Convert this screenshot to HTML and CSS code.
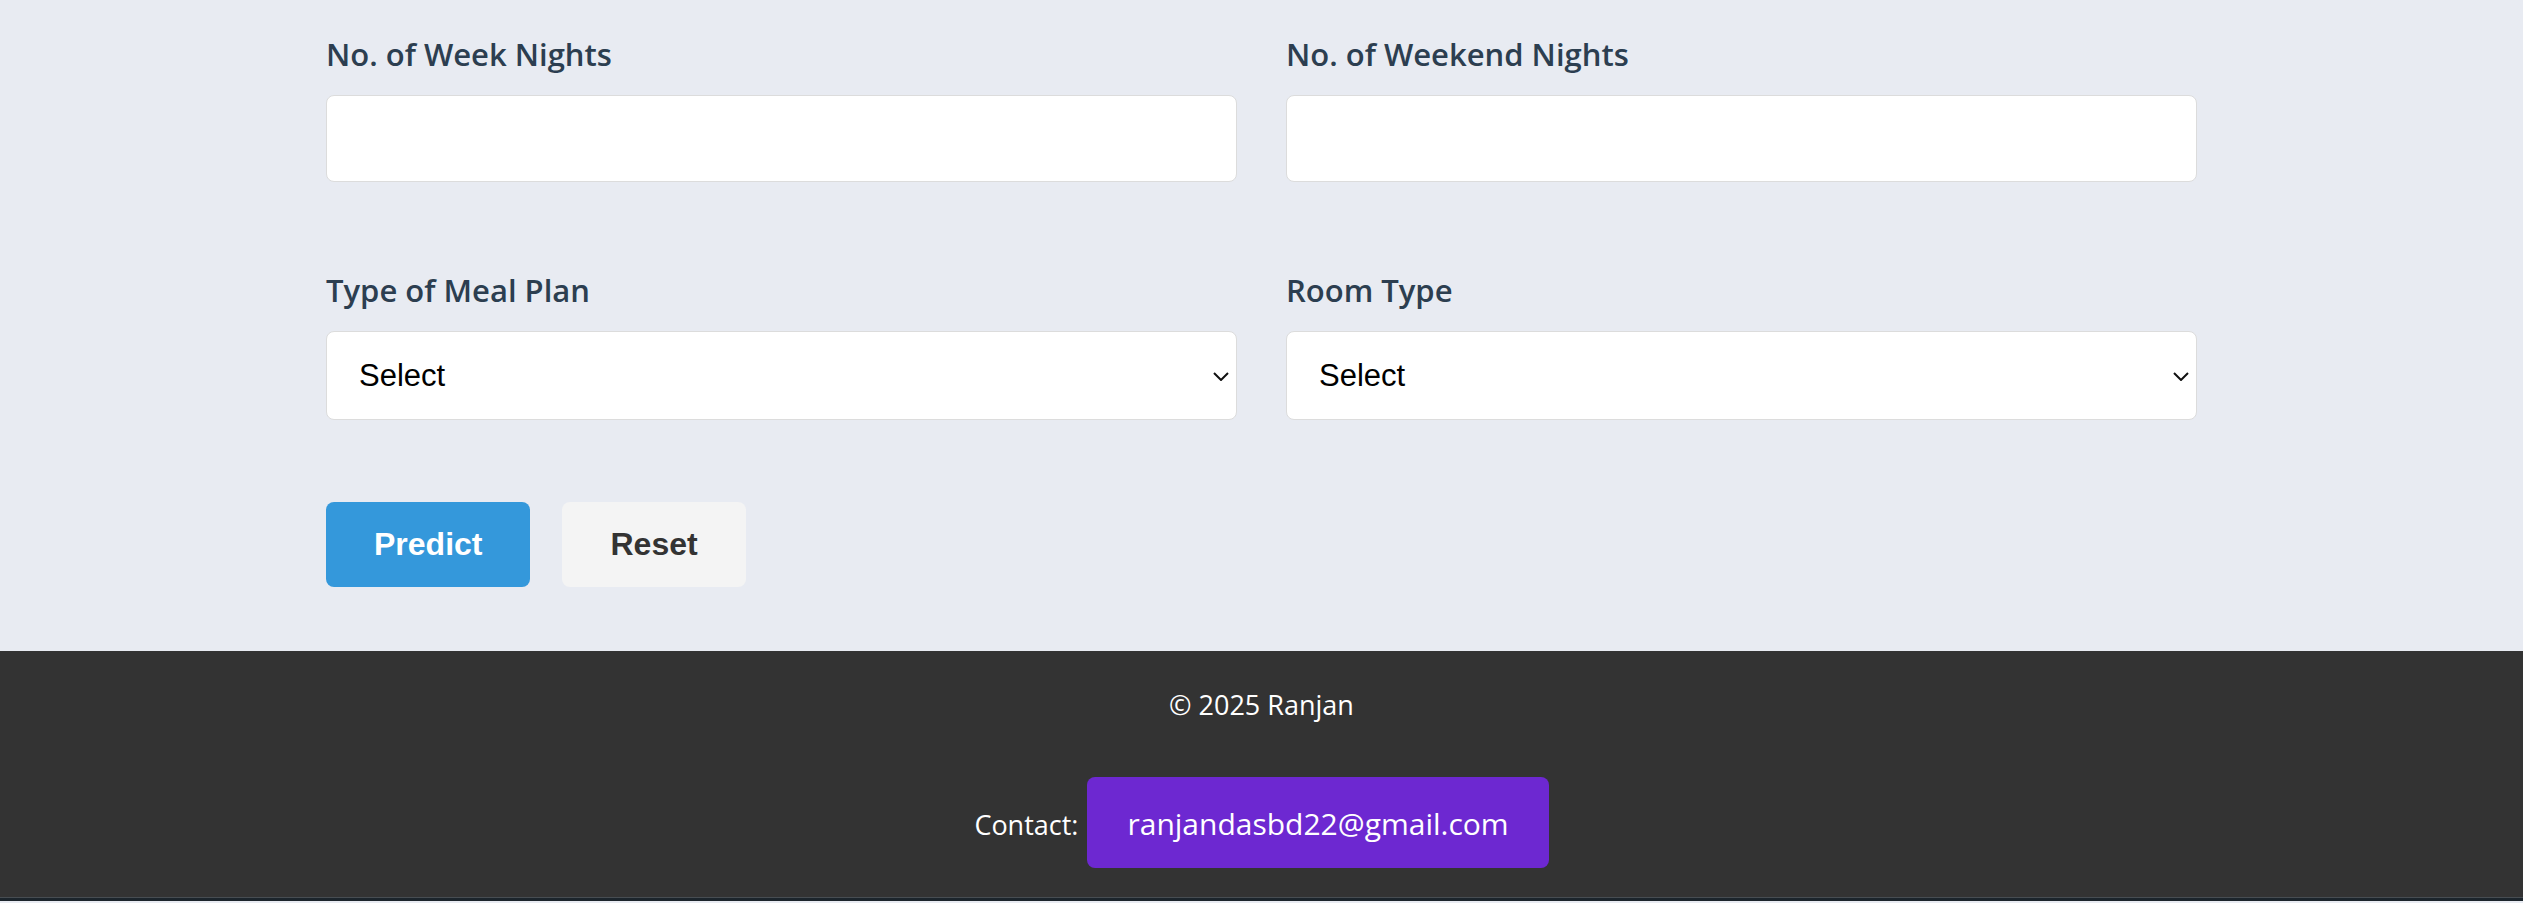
FILE: index.html
```html
<!DOCTYPE html>
<html lang="en">
<head>
<meta charset="utf-8">
<title>Booking Prediction</title>
<link rel="stylesheet" href="styles.css">
</head>
<body>
<main class="main">
  <form class="form">
    <div class="grid">
      <div class="group">
        <label class="label" for="wn">No. of Week Nights</label>
        <input class="field" id="wn" type="text">
      </div>
      <div class="group">
        <label class="label" for="wen">No. of Weekend Nights</label>
        <input class="field" id="wen" type="text">
      </div>
      <div class="group">
        <label class="label" for="meal">Type of Meal Plan</label>
        <div class="select-wrap">
          <select class="field select" id="meal"><option>Select</option></select>
          <svg class="chev" width="16" height="9" viewBox="0 0 16 9"><polyline points="1,1 8,8 15,1" fill="none" stroke="#111" stroke-width="2"/></svg>
        </div>
      </div>
      <div class="group">
        <label class="label" for="room">Room Type</label>
        <div class="select-wrap">
          <select class="field select" id="room"><option>Select</option></select>
          <svg class="chev" width="16" height="9" viewBox="0 0 16 9"><polyline points="1,1 8,8 15,1" fill="none" stroke="#111" stroke-width="2"/></svg>
        </div>
      </div>
    </div>
    <div class="actions">
      <button type="button" class="btn btn-primary">Predict</button>
      <button type="reset" class="btn btn-reset">Reset</button>
    </div>
  </form>
</main>
<footer class="footer">
  <p class="copy">© 2025 Ranjan</p>
  <p class="contact"><span class="contact-label">Contact:</span><a class="email" href="#">ranjandasbd22@gmail.com</a></p>
</footer>
<div class="edge"></div>
</body>
</html>
```

FILE: styles.css
```css
* { box-sizing: border-box; }
html, body { margin: 0; padding: 0; }
body {
  background: #e8ebf2;
  font-family: "Open Sans", "Noto Sans", sans-serif;
}
.main {
  padding: 34px 0 64px;
}
.form {
  width: 1871px;
  margin: 0 auto;
}
.grid {
  display: grid;
  grid-template-columns: 1fr 1fr;
  column-gap: 49px;
  row-gap: 88px;
}
.group {
  display: flex;
  flex-direction: column;
}
.label {
  display: block;
  font-size: 31px;
  font-weight: 600;
  line-height: 40px;
  color: #2c3e50;
  margin-bottom: 21px;
}
.field {
  display: block;
  width: 100%;
  height: 87px;
  background: #fff;
  border: 1.6px solid #dcdcdc;
  border-radius: 8px;
  font-family: "Liberation Sans", Arial, sans-serif;
  font-size: 31px;
  color: #000;
  padding: 0 32px;
  outline: none;
}
.select-wrap {
  position: relative;
}
.select {
  height: 89px;
  appearance: none;
  -webkit-appearance: none;
}
.chev {
  position: absolute;
  right: 8px;
  top: 50%;
  margin-top: -4px;
  pointer-events: none;
}
.actions {
  display: flex;
  gap: 32px;
  margin-top: 82px;
}
.btn {
  font-family: "Liberation Sans", Arial, sans-serif;
  font-size: 32px;
  font-weight: 700;
  line-height: 37px;
  padding: 24px 48px;
  border: none;
  border-radius: 8px;
}
.btn-primary {
  background: #3498db;
  color: #fff;
}
.btn-reset {
  background: #f4f4f4;
  color: #333;
}
.footer {
  background: #333;
  color: #fff;
  display: flex;
  flex-direction: column;
  align-items: center;
  padding: 36px 0 29px;
}
.copy {
  margin: 0;
  font-size: 27px;
  line-height: 36px;
}
.contact {
  margin: 54px 0 0;
  display: flex;
  align-items: baseline;
}
.contact-label {
  font-size: 27px;
  line-height: 36px;
}
.email {
  margin-left: 9px;
  background: #6d28d1;
  color: #fff;
  text-decoration: none;
  font-size: 30px;
  line-height: 40px;
  padding: 27px 40px 24px;
  border-radius: 8px;
}
.edge {
  height: 4px;
  background: #1c252c;
  border-top: 1px solid #474d52;
}
```
